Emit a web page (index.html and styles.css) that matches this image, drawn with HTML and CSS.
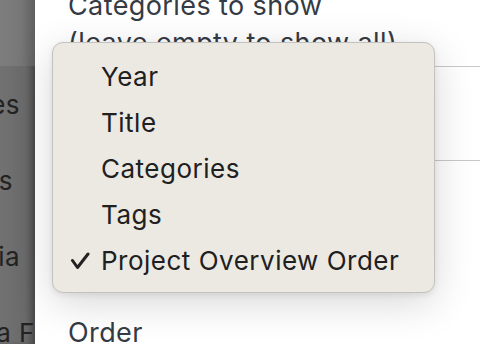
FILE: index.html
```html
<!DOCTYPE html>
<html lang="en">
<head>
<meta charset="UTF-8">
<meta name="viewport" content="width=device-width, initial-scale=1.0">
<title>Settings</title>
<link rel="stylesheet" href="styles.css">
</head>
<body>

<div id="page">
    <div id="sidebar">
        <div class="side-top"></div>
        <div class="side-list">
            <div class="side-item">Categories</div>
            <div class="side-item">Projects</div>
            <div class="side-item">Media</div>
            <div class="side-item">Data Fields</div>
        </div>
    </div>

    <div id="main">
        <div class="label">Categories to show<br>(leave empty to show all)</div>
        <div class="field"></div>
        <div class="label order">Order</div>
    </div>

    <div id="menu">
        <div class="item">Year</div>
        <div class="item">Title</div>
        <div class="item">Categories</div>
        <div class="item">Tags</div>
        <div class="item checked">
            <svg class="tick" width="20" height="18" viewBox="0 0 20 18"><path d="M2.5 8.5 L7.5 15.5 L18 2" fill="none" stroke="#222" stroke-width="3" stroke-linecap="round" stroke-linejoin="round"/></svg>Project Overview Order
        </div>
    </div>
</div>

</body>
</html>
```

FILE: styles.css
```css
body {
    margin: 0;
    padding: 0;
    font-family: Inter, "Noto Sans", sans-serif;
    background: #fff;
    overflow: hidden;
}
#page {
    position: relative;
    display: flex;
    height: 344px;
    overflow: hidden;
}
#sidebar {
    width: 35px;
    flex-shrink: 0;
    background: linear-gradient(to right, #727272, #6a6a6a 70%, #545454);
    overflow: hidden;
    box-shadow: inset -3px 0 4px rgba(0, 0, 0, 0.15);
}
.side-top {
    height: 66px;
    background: linear-gradient(to right, #7e7e7e, #777 60%, #5f5f5f);
}
.side-list {
    padding-top: 21px;
}
.side-item {
    font-size: 26px;
    letter-spacing: 0.4px;
    line-height: 36px;
    height: 76px;
    color: #222;
    white-space: nowrap;
    display: flex;
    justify-content: flex-end;
}
.side-item:nth-child(1) { margin-right: 15px; }
.side-item:nth-child(2) { margin-right: 22px; }
.side-item:nth-child(3) { margin-right: 15px; }
.side-item:nth-child(4) { justify-content: flex-start; margin-left: -47px; }
#main {
    flex: 1;
    padding-left: 33px;
}
.label {
    font-size: 27px;
    letter-spacing: 0.4px;
    line-height: 37px;
    color: #353b44;
    white-space: nowrap;
}
#main > .label:first-child {
    margin-top: -13px;
}
.field {
    margin-top: 5px;
    height: 93px;
    border-top: 1px solid #c9c9c9;
    border-bottom: 1px solid #c9c9c9;
}
.order {
    margin-top: 153px;
}
#menu {
    position: absolute;
    left: 52px;
    top: 42px;
    width: 383px;
    height: 251px;
    background: #ece9e3;
    border: 1px solid #c4c2be;
    border-radius: 11px;
    box-shadow: 0 10px 40px rgba(0, 0, 0, 0.16), 0 2px 6px rgba(0, 0, 0, 0.08);
    padding-top: 11px;
    box-sizing: border-box;
}
.item {
    position: relative;
    font-size: 26px;
    letter-spacing: 0.5px;
    line-height: 46px;
    padding-left: 48px;
    color: #202020;
}
.tick {
    position: absolute;
    left: 17px;
    top: 14px;
}
```
